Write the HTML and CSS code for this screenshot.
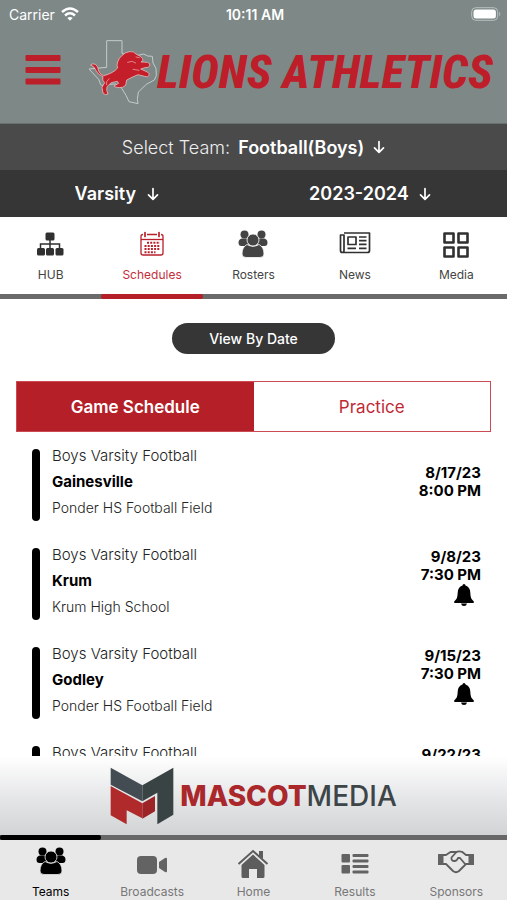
FILE: index.html
```html
<!DOCTYPE html>
<html lang="en">
<head>
<meta charset="utf-8">
<meta name="viewport" content="width=device-width, initial-scale=1">
<title>Lions Athletics</title>
<link rel="stylesheet" href="styles.css">
</head>
<body>
<svg class="sprite" aria-hidden="true">
  <symbol id="arrow" viewBox="0 0 12 14"><path d="M6 1.500v10.500M1.500 7.800 6 12.300l4.500-4.500" fill="none" stroke="currentColor" stroke-width="1.700" stroke-linecap="round" stroke-linejoin="round"/></symbol>
  <symbol id="people" viewBox="0 0 30 28">
    <g fill="currentColor"><circle cx="6.500" cy="4.500" r="4"/><circle cx="23.500" cy="4.500" r="4"/>
    <path d="M3.500 8.500h6l1 7.500H3.500Q.500 16 .5 12.500q0-3 3-4zM26.500 8.500h-6l-1 7.500h7q3 0 3-3.500 0-3-3-4z"/></g>
    <path d="M9 14.500q6 3.500 12 0 5 2.500 5 9.500 0 3.500-4 3.500H8q-4 0-4-3.500 0-7 5-9.500z" fill="currentColor" stroke="var(--surface)" stroke-width=".8"/>
    <circle cx="15" cy="10" r="6" fill="currentColor" stroke="var(--surface)" stroke-width=".8"/>
  </symbol>
  <symbol id="bell" viewBox="0 0 20 22"><path d="M10 0q1.500 0 1.500 1.500 4.500 1.300 4.800 7 .2 5 1.500 6.800l2 2.200q.5 1.500-.8 1.500H1q-1.300 0-.8-1.500l2-2.200q1.300-1.800 1.500-6.800.3-5.700 4.800-7Q8.500 0 10 0zM7 19.500h6q-.5 2.500-3 2.500t-3-2.500z" fill="currentColor"/></symbol>
</svg>

<header class="masthead">
  <div class="status">
    <span class="carrier">Carrier
      <svg width="18" height="14" viewBox="0 0 18 14" aria-hidden="true"><g fill="none" stroke="#fff" stroke-width="2.400"><path d="M1 5q8-7 16 0"/><path d="M4 8.500q5-4.300 10 0"/></g><path d="M6.300 11q2.700-2 5.400 0L9 13.800z" fill="#fff"/></svg>
    </span>
    <span class="clock">10:11 AM</span>
    <svg class="battery" width="30" height="14" viewBox="0 0 30 14" aria-hidden="true"><rect x=".7" y=".7" width="26" height="12.600" rx="4" fill="none" stroke="#b9c0bf" stroke-width="1"/><rect x="2.500" y="2.500" width="22.400" height="9" rx="2.500" fill="#fff"/><path d="M28.300 4.500q2 2.500 0 5z" fill="#b9c0bf"/></svg>
  </div>
  <div class="brandbar">
    <button class="menu" type="button" aria-label="Menu"><svg width="36" height="30" viewBox="0 0 36 30"><g fill="#bc1f2a"><rect y="0" x=".5" width="35" height="6" rx="1"/><rect x=".5" y="12" width="35" height="6" rx="1"/><rect x=".5" y="23.500" width="35" height="6" rx="1"/></g></svg></button>
    <a class="brand" href="#">
      <svg width="70" height="68" viewBox="22 27 210 204" aria-hidden="true">
        <path d="M81 35h46v38l20 7 28-1 17-4 12 6 14 1 2 20 9 16 1 22-6 13-24 13-24 23-3 22 2 13-27-6-9-19-13-21-18-13-22 1-10 8-13-7-6-16-29-31 53-5z" fill="none" stroke="#c3cccb" stroke-width="3" stroke-linejoin="round"/>
        <path d="M37 105q14-2 18 13 2 16 17 22 10-2 22-8 12-5 20-15-4-9 0-18 4-13 14-20 7-9 22-11 12-2 19 7l13 7q9 8 8 12l-6 5 19 1q9 2 7 10-2 7-14 6l-13 4 20 9q8 5 5 11-4 6-13 2l-20-5q-10 4-18 8l-16 8-3 16q-8 8-20 7-13-1-15-5l14-8-4-6-18 4-13 12-1 11 4 11-8 2-7-5-3-17 8-14-6-8 1-10q-16-6-22-20-3-10-15-15z" fill="#c41e2a" stroke="#f3d2d0" stroke-width="2" stroke-linejoin="round"/>
        <path d="M144 100l14-3 10 5M160 121l18 3M88 149q-10 8-8 18M169 84l10 2" fill="none" stroke="#f3b7b7" stroke-width="2" stroke-linecap="round"/>
      </svg>
      <span class="wordmark">LIONS ATHLETICS</span>
    </a>
  </div>
</header>

<section class="filters" aria-label="Filters">
  <div class="filter team">
    <label for="team">Select Team:</label>
    <select id="team"><option>Football(Boys)</option></select>
    <svg class="arrow" aria-hidden="true"><use href="#arrow"/></svg>
  </div>
  <div class="filter-row">
    <div class="filter"><select aria-label="Level"><option>Varsity</option></select><svg class="arrow" aria-hidden="true"><use href="#arrow"/></svg></div>
    <div class="filter"><select aria-label="Season"><option>2023-2024</option></select><svg class="arrow" aria-hidden="true"><use href="#arrow"/></svg></div>
  </div>
</section>

<nav class="tabs sections" aria-label="Team sections">
  <a href="#"><svg width="28" height="28" viewBox="1 0 28 28"><g fill="#303030"><rect x="9.500" y="2.500" width="9" height="8" rx="1.500"/><rect x="1" y="18" width="8" height="7.500" rx="1.500"/><rect x="10" y="18" width="8" height="7.500" rx="1.500"/><rect x="19.500" y="18" width="8" height="7.500" rx="1.500"/></g><path d="M14 9v10M4.500 19v-5h19v5" fill="none" stroke="#303030" stroke-width="1.500"/></svg>HUB</a>
  <a href="#" class="active" aria-current="page"><svg width="28" height="28" viewBox="0 0 28 28"><g fill="none" stroke="#b91f2b" stroke-width="1.300"><rect x="3" y="4.500" width="22" height="20.500" rx="2"/><path d="M3 9.500h22"/><path d="M9 12.700h13M6.500 15.900h15.500M6.500 19.100h15.500M6.500 22.300h11" stroke-width="2" stroke-dasharray="2 1.200"/></g><path d="M7 2.500v4M21 2.500v4" stroke="#fff" stroke-width="4"/><path d="M7 2.500v4M21 2.500v4" stroke="#b91f2b" stroke-width="1.700" stroke-linecap="round"/></svg>Schedules</a>
  <a href="#"><svg width="30" height="28"><use href="#people"/></svg>Rosters</a>
  <a href="#"><svg width="32" height="28" viewBox="0 0 32 28"><g fill="none" stroke="#303030" stroke-width="1.700" stroke-linejoin="round"><path d="M5 3h25.500v17.500q0 2-2 2H3.500q-2 0-2-2V5H5v15.500q0 2-1.500 2"/><rect x="9" y="7" width="8" height="7.500"/><path d="M20 7h7.500M20 10.700h7.500M20 14.400h7.500M8.500 18.300h8.500M20 18.300h7.500"/></g></svg>News</a>
  <a href="#"><svg width="28" height="28" viewBox="0 0 28 28"><g fill="none" stroke="#303030" stroke-width="2.600" stroke-linejoin="round"><rect x="2.500" y="3.500" width="9" height="9"/><rect x="16.500" y="3.500" width="9" height="9"/><rect x="2.500" y="17.500" width="9" height="9"/><rect x="16.500" y="17.500" width="9" height="9"/></g></svg>Media</a>
</nav>

<main class="content">
  <button class="pill" type="button">View By Date</button>
  <div class="segmented">
    <button class="selected" type="button" aria-pressed="true">Game Schedule</button>
    <button type="button" aria-pressed="false">Practice</button>
  </div>
  <ul class="games">
    <li class="game"><div class="match"><p>Boys Varsity Football</p><h2>Gainesville</h2><p class="venue">Ponder HS Football Field</p></div><div class="when"><time>8/17/23</time><time>8:00 PM</time></div></li>
    <li class="game"><div class="match"><p>Boys Varsity Football</p><h2>Krum</h2><p class="venue">Krum High School</p></div><div class="when"><time>9/8/23</time><time>7:30 PM</time><button class="alert" type="button" aria-label="Notify me"><svg width="20" height="22"><use href="#bell"/></svg></button></div></li>
    <li class="game"><div class="match"><p>Boys Varsity Football</p><h2>Godley</h2><p class="venue">Ponder HS Football Field</p></div><div class="when"><time>9/15/23</time><time>7:30 PM</time><button class="alert" type="button" aria-label="Notify me"><svg width="20" height="22"><use href="#bell"/></svg></button></div></li>
    <li class="game"><div class="match"><p>Boys Varsity Football</p></div><div class="when"><time>9/22/23</time></div></li>
  </ul>
</main>

<footer class="dock">
  <a class="sponsor" href="#">
    <svg width="64" height="58" viewBox="0 0 192 174" aria-hidden="true"><path d="M2 2 97 55 97 103 2 53z" fill="#434b53"/><path d="M190 2 97 55v48l45-26v95l48-29z" fill="#3a4344"/><path d="M2 57 97 109v45L50 130v42L2 145z" fill="#b02a2c"/><path d="m97 109 38-22v46l-38 22z" fill="#9c2427"/></svg>
    <span class="sponsor-name"><b>MASCOT</b>MEDIA</span>
  </a>
  <nav class="tabs primary" aria-label="Main">
    <a href="#" class="active" aria-current="page"><svg width="30" height="32"><use href="#people" width="30" height="28"/></svg>Teams</a>
    <a href="#"><svg width="32" height="32" viewBox="0 -4 32 32"><rect x="1" y="5" width="20" height="18" rx="4" fill="#636363"/><path d="m23 11 6-4q2-1 2 1v12q0 2-2 1l-6-4z" fill="#636363"/></svg>Broadcasts</a>
    <a href="#"><svg width="32" height="32" viewBox="0 -2 32 32"><path d="M1.500 15 16 2l14.500 13" fill="none" stroke="#5d5d5d" stroke-width="2"/><path d="M22 2h4v8l-4-3zM4.500 16 16 5.500 27.500 16v11.500q0 1.500-1.500 1.500h-6v-9h-8v9H6q-1.500 0-1.500-1.500z" fill="#5d5d5d"/></svg>Home</a>
    <a href="#"><svg width="28" height="32" viewBox="0 -3 28 32"><g fill="#636363"><rect x=".5" y="4" width="8.500" height="8.500" rx="1"/><rect x=".5" y="15" width="8.500" height="8.500" rx="1"/><rect x="11.500" y="4" width="16" height="3" rx="1"/><rect x="11.500" y="9.500" width="16" height="3" rx="1"/><rect x="11.500" y="15" width="16" height="3" rx="1"/><rect x="11.500" y="20.500" width="16" height="3" rx="1"/></g></svg>Results</a>
    <a href="#"><svg width="36" height="32" viewBox="0 -2 36 32"><path d="M0 5h5.500v11H0zM30.500 5H36v11h-5.500z" fill="#636363"/><g fill="none" stroke="#5d5d5d" stroke-width="1.800" stroke-linejoin="round" stroke-linecap="round"><path d="M5.500 6H8l4.500-3h6M5.500 15H8l7 7q3 2.500 6 0l6-6 1-1h2.500M30.500 6H28l-4-3.200q-4-1-6 .7l-4.500 5q-.5 3.500 3 3.500 2.500 0 3.500-3h2l5.500 6.500"/></g></svg>Sponsors</a>
  </nav>
</footer>
</body>
</html>
```
FILE: styles.css
```css
:root {
  --surface: #fff;
  --red: #b51f27;
  --dark: #363636;
}

* { box-sizing: border-box; }

body {
  margin: 0;
  height: 100vh;
  display: flex;
  flex-direction: column;
  background: var(--surface);
  color: #000;
  font-family: Inter, "Liberation Sans", sans-serif;
}

a { color: inherit; text-decoration: none; }
button, select { font: inherit; color: inherit; border: 0; padding: 0; margin: 0; background: none; }
p, h2, ul { margin: 0; padding: 0; }
svg { display: block; flex: none; }
.sprite { position: absolute; width: 0; height: 0; }

.masthead { background: #7d8887; padding-bottom: 11px; border-bottom: 1px solid #69706f; }
.status {
  display: grid;
  grid-template-columns: 1fr auto 1fr;
  align-items: center;
  height: 28px;
  padding: 0 6px 0 9px;
  color: #fff;
  font-size: 14px;
}
.carrier { display: flex; align-items: center; gap: 6px; }
.clock { font-weight: 600; }
.battery { justify-self: end; }
.brandbar { display: flex; align-items: center; gap: 26px; height: 84px; padding: 4px 10px 0 25px; }
.menu { height: 30px; margin-top: -4px; }
.brand { display: flex; align-items: center; flex: 1; }
.wordmark {
  color: #bd1e29;
  font-family: "Roboto Condensed", Roboto, "Liberation Sans", sans-serif;
  font-size: 47px;
  font-style: italic;
  font-weight: 800;
  line-height: 56px;
  white-space: nowrap;
}

.filters { color: #fff; font-size: 18px; background: var(--dark); }
.filter { display: flex; align-items: center; justify-content: center; gap: 10px; }
.filter select { appearance: none; font-weight: 600; }
.filter option { color: #000; }
.arrow { width: 12px; height: 14px; }
.team { height: 46px; background: #4a4a4a; gap: 8px; }
.team label { color: #eee; font-weight: 300; }
.filter-row { display: grid; grid-template-columns: 46% 54%; height: 47px; }

.tabs { display: grid; grid-template-columns: repeat(5, 1fr); font-size: 12px; }
.tabs a { display: flex; flex-direction: column; align-items: center; position: relative; line-height: 16px; }
.tabs .active::after { content: ""; position: absolute; left: 0; right: 0; height: 5px; border-radius: 2px; }
.sections { border-bottom: 5px solid #6a6a6a; color: #444; }
.sections a { height: 77px; padding-top: 13px; gap: 9px; }
.sections .active { color: #c32e3b; }
.sections .active::after { bottom: -5px; background: var(--red); }

.content { flex: 1; min-height: 0; overflow: hidden; padding: 24px 16px 0; }
.pill {
  display: block;
  margin: 0 auto 27px;
  height: 31px;
  padding: 0 37px;
  border-radius: 16px;
  background: var(--dark);
  color: #fff;
  font-size: 14px;
  font-weight: 500;
}
.segmented { display: grid; grid-template-columns: 1fr 1fr; height: 51px; border: 1px solid #cb4b54; font-size: 17px; color: #c02a36; }
.segmented .selected { background: var(--red); color: #fff; font-weight: 600; }

.games { list-style: none; padding: 17px 10px 0 16px; display: grid; gap: 27px; }
.game { position: relative; display: flex; justify-content: space-between; min-height: 72px; padding-left: 20px; }
.game::before { content: ""; position: absolute; left: 0; top: 0; bottom: 0; width: 8px; border-radius: 4px; background: #000; }
.match { font-size: 15px; font-weight: 300; line-height: 14px; color: #222; display: flex; flex-direction: column; gap: 12px; }
.match h2 { font-size: 15px; font-weight: 700; color: #000; }
.match .venue { font-size: 14px; }
.when { display: flex; flex-direction: column; align-items: flex-end; padding-top: 15px; font-size: 15px; font-weight: 700; line-height: 18px; }
.game:not(:first-child) .when { padding-top: 0; }
.alert { padding: 0 7px 0 0; }

.dock { --surface: #e8e8e8; background: var(--surface); }
.sponsor {
  display: flex;
  align-items: center;
  justify-content: center;
  gap: 6px;
  height: 79px;
  background: linear-gradient(#fff, #e2e3e5 60%, #d1d3d5);
}
.sponsor-name { font-size: 28px; font-weight: 500; color: #3d4548; line-height: 32px; }
.sponsor-name b { font-weight: 800; color: #aa282b; }
.primary { border-top: 5px solid #686868; color: #777; }
.primary a { height: 60px; padding-top: 7px; gap: 5px; }
.primary .active { color: #000; }
.primary .active::after { top: -5px; background: #000; }
```
